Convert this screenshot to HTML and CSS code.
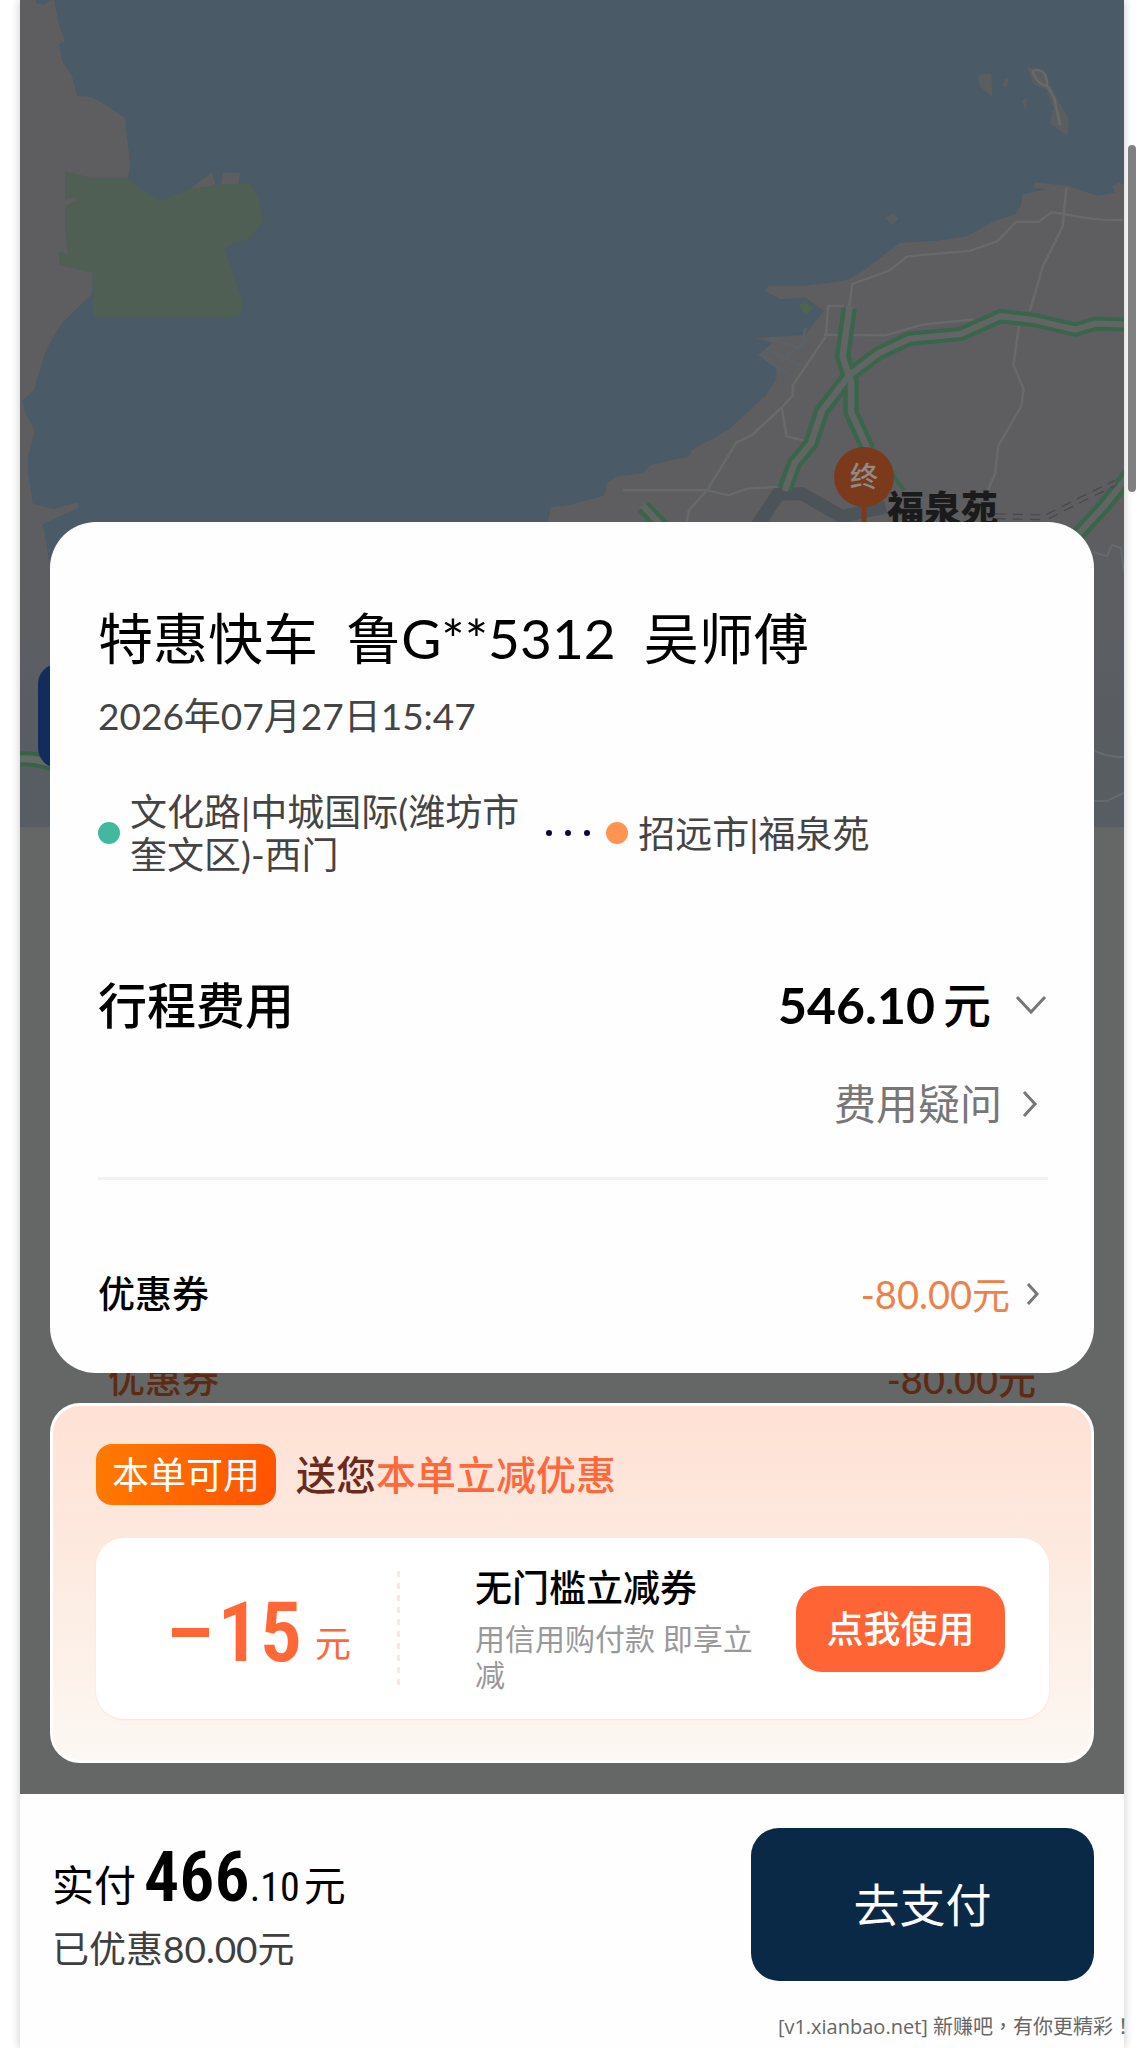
FILE: index.html
```html
<!DOCTYPE html>
<html lang="zh-CN">
<head>
<meta charset="utf-8">
<meta name="viewport" content="width=device-width, initial-scale=1">
<title>订单支付</title>
<link rel="stylesheet" href="styles.css">
</head>
<body>
<div class="phone">
  <main class="stage">
    <svg class="map" viewBox="21 0 1104 827" preserveAspectRatio="xMidYMin slice" aria-hidden="true">
      <defs>
        <linearGradient id="ground" x1="0" y1="0" x2="0" y2="1">
          <stop offset="0" stop-color="#5e5e61"/>
          <stop offset=".6" stop-color="#5e5e61"/>
          <stop offset="1" stop-color="#575d62"/>
        </linearGradient>
      </defs>
      <rect x="0" y="0" width="1145" height="827" fill="url(#ground)"/>
      <path fill="#4a5a66" d="M55 0 60 25 66 41 60 44 63 61 73 76 78 96 93 97 108 106 126 118 129 145 131 166 129 176 94 260 93 294 62 324 47 350 35 390 23 401 26 412 36 431 29 456 29 473 34 504 55 509 79 502 79 508 44 524 50 560 400 560 552 523 552 508H1125V0Z"/>
      <path fill="#4a5a66" d="M37 0h14l-6 5-8-2z"/>
      <path fill="#5e5e61" d="M190 190 213 172 217 186ZM222 185 224 173H241L239 185Z"/>
      <path fill="#505f54" d="M66 171 89 177H128L141 189 161 201 190 189 223 184H252L259 196 264 221 252 237 225 248 234 274 243 301 242 315 234 317H94V273L60 265V252L69 253 66 233V206L77 201V197L66 199Z"/>
      <g transform="translate(573 0) scale(.3648 .3381)">
        <path fill="#5e5e61" d="M1520 550 1500 540 1480 552 1490 570 1440 578 1360 550 1270 540 1265 555 1300 560 1235 575 1230 610 1215 635 1165 650 1130 670 1080 700 1000 712 900 718 860 750 800 800 750 830 640 845H540L528 860 570 885 640 880 690 920 660 960 640 990 505 1000 550 1015 510 1050 560 1090V1120L530 1170 480 1220 430 1270 330 1330 320 1350 215 1375 195 1400 120 1410 95 1430 90 1465 0 1492-58 1500-75 1600H1520Z"/>
        <path fill="#5a5e61" d="M1112 230 1125 218H1150L1152 285 1120 258ZM1185 232l12-4-4 28-12 2ZM1232 300l14-10v34ZM1248 200 1290 205 1308 245 1340 310 1362 350 1358 405 1342 390 1310 365 1320 320 1300 265 1265 250ZM860 645 880 630 895 648 875 665Z"/>
        <path fill="#4f6450" d="M622 900 640 892 660 912 640 932Z"/>
        <g fill="none" stroke="#686969" stroke-width="7">
          <path d="M1262 210q30-10 38 20t-10 20-28-40M1300 250l22 40 16 80"/>
          <path d="M1512 650Q1440 655 1345 632L1315 628 1280 656H1218L1165 714 1090 742 920 758 870 800 768 840 760 912M1355 555 1345 670 1290 790 1255 920M1225 965 1210 1080 1238 1150 1232 1200 1168 1320 1160 1400 1140 1450M745 905H702L696 995 605 1140V1170L575 1205 495 1285 450 1310 370 1450 320 1510 315 1545M575 1205 588 1290 640 1305M690 990 860 992 960 960 1100 945M140 1450H370L430 1465 480 1445 570 1440"/>
        </g>
        <g fill="none" stroke="#596269" stroke-width="7">
          <path d="M530 1030 625 1080M570 1070 650 1000M520 1050 600 1110M540 1000 630 1030 640 970"/>
        </g>
        <path d="M505 1560 565 1462 630 1460 740 1528 805 1512 860 1500" fill="none" stroke="#4c5359" stroke-width="38"/>
        <g fill="none" stroke="#3a654c" stroke-width="42">
          <path d="M583 1447 610 1370 655 1312 685 1215 760 1110 840 1045 925 1002 1065 988 1175 935 1270 947 1380 975 1435 957 1520 960"/>
          <path d="M760 912 742 1055 765 1130V1220L812 1330"/>
          <path d="M195 1498 250 1560M1530 1400 1460 1495 1370 1600"/>
          <path stroke-width="10" d="M870 1390 910 1450"/>
        </g>
        <g fill="none" stroke="#616664" stroke-width="18">
          <path d="M583 1452 610 1370 655 1312 685 1215 760 1110 840 1045 925 1002 1065 988 1175 935 1270 947 1380 975 1435 957 1520 960"/>
          <path d="M761 905 742 1055 765 1130V1220L812 1330"/>
          <path d="M193 1494 250 1560M1530 1400 1460 1495 1370 1600"/>
        </g>
        <path d="M1160 1527 1300 1530 1400 1475 1490 1428" fill="none" stroke="#48494c" stroke-width="18" stroke-dasharray="28 20"/>
        <path d="M1160 1527 1300 1530 1400 1475 1490 1428" fill="none" stroke="#5e5e61" stroke-width="10"/>
      </g>
      <path d="M1094 552 1108 556 1113 545 1122 548 1125 572M1094 750q15 8 31 7M1094 801h14l17-8" fill="none" stroke="#656a6d" stroke-width="2"/>
      <path d="M21 759q15-1 32 5" fill="none" stroke="#37624a" stroke-width="15"/>
      <path d="M21 759q15-1 32 5" fill="none" stroke="#646a66" stroke-width="7"/>
      <rect x="39" y="664" width="100" height="104" rx="20" fill="#142c5c"/>
      <path d="M865 500v24" stroke="#7c3a1c" stroke-width="5"/>
      <circle cx="865" cy="477" r="30" fill="#7c3a1c"/>
      <text class="pin-text" x="865" y="487" text-anchor="middle">终</text>
      <text class="pin-label" x="888" y="523">福泉苑</text>
    </svg>

    <section class="card">
      <h1 class="title">特惠快车&nbsp; 鲁G**5312&nbsp; 吴师傅</h1>
      <p class="date">2026年07月27日15:47</p>
      <div class="route">
        <span class="dot dot-start"></span>
        <span class="place">文化路|中城国际(潍坊市<br>奎文区)-西门</span>
        <span class="steps"><i></i><i></i><i></i></span>
        <span class="dot dot-end"></span>
        <span class="place">招远市|福泉苑</span>
      </div>
      <div class="row fee">
        <h2 class="fee-name">行程费用</h2>
        <button class="plain fee-sum" type="button"><b>546.10</b><span>元</span>
          <svg class="chev-down" width="32" height="20" viewBox="0 0 32 20" fill="none" stroke="#777" stroke-width="3"><path d="M2 2 16 17 30 2"/></svg>
        </button>
      </div>
      <a class="question" href="#question">费用疑问
        <svg width="16" height="28" viewBox="0 0 16 28" fill="none" stroke="#777" stroke-width="3"><path d="M2 2 13 14 2 26"/></svg>
      </a>
      <hr class="line">
      <a class="row coupon-row" href="#coupons">
        <span>优惠券</span>
        <span class="off">-80.00元
          <svg width="14" height="24" viewBox="0 0 14 24" fill="none" stroke="#777" stroke-width="3"><path d="M2 2 11 12 2 22"/></svg>
        </span>
      </a>
    </section>

    <div class="row under" aria-hidden="true"><span>优惠券</span><span>-80.00元</span></div>

    <section class="promo">
      <header class="promo-head">
        <span class="tag">本单可用</span>
        <h2 class="promo-title">送您<em>本单立减优惠</em></h2>
      </header>
      <div class="ticket">
        <div class="worth"><span class="minus"></span><b>15</b><span class="unit">元</span></div>
        <div class="detail">
          <h3>无门槛立减券</h3>
          <p>用信用购付款 即享立减</p>
        </div>
        <button class="use" type="button">点我使用</button>
      </div>
    </section>
  </main>

  <footer class="pay">
    <div>
      <p class="total">实付<b>466</b><small>.10</small><span>元</span></p>
      <p class="saved">已优惠80.00元</p>
    </div>
    <button class="go" type="button">去支付</button>
  </footer>
  <p class="mark" lang="zh-TW">[v1.xianbao.net] 新赚吧，有你更精彩！</p>
</div>
<div class="scrollbar"></div>
</body>
</html>
```
FILE: styles.css
```css
* { box-sizing: border-box; }

body {
  margin: 0;
  background: #fff;
  color: #000;
  font: 37px/44px Lato, "Noto Sans CJK SC", sans-serif;
}

h1, h2, h3, p { margin: 0; font-weight: 400; }
a { color: inherit; text-decoration: none; }
button { border: 0; padding: 0; font: inherit; color: inherit; cursor: pointer; }
svg { flex: none; }

.phone {
  margin: 0 21px 0 20px;
  background: #fefefe;
  box-shadow: 0 0 9px rgba(0, 0, 0, .22);
}

.stage {
  position: relative;
  overflow: hidden;
  padding: 522px 30px 31px;
  background: #656666;
}

.map {
  position: absolute;
  top: 0;
  left: 0;
  width: 100%;
  height: 827px;
}

.pin-text { font-size: 28px; font-weight: 500; fill: #8f8a85; }
.pin-label { font-size: 37px; font-weight: 900; fill: #1b1b1c; }

.row { display: flex; align-items: center; justify-content: space-between; }

.card {
  position: relative;
  z-index: 1;
  padding: 84px 46px 57px 48px;
  border-radius: 46px;
  background: #fefefe;
}

.title { font-size: 55px; line-height: 64px; }
.date { margin-top: 24px; color: #444; }

.route {
  display: flex;
  align-items: center;
  margin-top: 52px;
  color: #444;
  line-height: 43px;
}
.place { margin-left: 10px; }
.dot { width: 22px; height: 22px; border-radius: 50%; }
.dot-start { background: #42b99f; }
.dot-end { background: #ff9350; }
.steps { display: flex; gap: 13px; margin: 0 16px 0 27px; }
.steps i { width: 6px; height: 6px; border-radius: 50%; background: #0a0a3c; }

.fee { margin-top: 101px; font-size: 48px; line-height: 56px; }
.fee-name { font-size: 49px; font-weight: 500; }
.plain { background: none; }
.fee-sum { display: flex; align-items: center; font-weight: 500; }
.fee-sum b { font-size: 50px; font-weight: 700; }
.fee-sum span { margin-left: 8px; }
.chev-down { margin: 0 1px 0 24px; }

.question {
  display: flex;
  align-items: center;
  justify-content: flex-end;
  gap: 20px;
  width: fit-content;
  margin: 47px 10px 0 auto;
  color: #777;
  font-size: 42px;
  line-height: 48px;
}

.line { height: 3px; margin: 49px 0 0; border: 0; background: #f1f1f1; }

.coupon-row { margin-top: 92px; font-weight: 500; }
.off {
  display: flex;
  align-items: center;
  gap: 16px;
  margin-right: 8px;
  color: #ed8147;
  font-size: 38px;
  font-weight: 400;
}

.under {
  margin: -16px 58px 2px;
  color: #5c2b15;
  font-weight: 500;
}
.under span + span { font-size: 38px; }

.promo {
  position: relative;
  padding: 38px 42px 41px 43px;
  border: 3px solid #fff;
  border-radius: 30px;
  background: linear-gradient(#ffe1d5, #fde9de 40%, #fcf8f3);
}
.promo-head { display: flex; align-items: center; gap: 20px; margin-bottom: 33px; }
.tag {
  padding: 0 16px;
  border-radius: 16px;
  background: linear-gradient(100deg, #ff7b00, #ff5200);
  color: #fff;
  line-height: 61px;
}
.promo-title { color: #6a2a1e; font-size: 40px; font-weight: 500; }
.promo-title em { color: #ff683a; font-style: normal; }

.ticket {
  display: flex;
  align-items: center;
  min-height: 181px;
  padding: 0 44px 0 0;
  border-radius: 28px;
  background: #fff;
  box-shadow: 0 1px 2px #fde0d3;
}
.worth {
  display: flex;
  align-items: center;
  justify-content: flex-end;
  flex: none;
  width: 304px;
  height: 116px;
  padding: 8px 49px 0 0;
  background: repeating-linear-gradient(#fbe6df 0 6px, transparent 6px 12px) right / 3px 100% no-repeat;
  color: #ff6737;
  font-size: 36px;
}
.worth b { margin: 0 13px 0 8px; font: 600 84px/96px "Roboto Condensed", Roboto, sans-serif; }
.minus { width: 37px; height: 9px; background: #ff6737; }
.unit { padding-top: 20px; }
.detail { flex: 1; margin: 0 30px 0 75px; color: #999; font-size: 30px; line-height: 36px; }
.detail h3 { margin-bottom: 10px; color: #000; font-size: 37px; font-weight: 500; line-height: 44px; }
.use {
  width: 209px;
  height: 86px;
  border-radius: 26px;
  background: #ff6534;
  color: #fff;
  font-weight: 500;
}

.pay {
  display: flex;
  align-items: center;
  justify-content: space-between;
  padding: 34px 30px 32px 32px;
}
.total { font-size: 42px; line-height: 78px; }
.total b { margin-left: 8px; font: 600 70px/78px "Roboto Condensed", Roboto, sans-serif; }
.total small { font: 40px/78px "Roboto Condensed", Roboto, sans-serif; }
.total span { margin-left: 4px; }
.saved { color: #3f3f3f; }
.go {
  width: 343px;
  height: 153px;
  border-radius: 28px;
  background: #0a2946;
  color: #fff;
  font-size: 46px;
}

.mark {
  padding-bottom: 7px;
  margin-right: -9px;
  color: #666;
  font: 20px/28px "Open Sans", "Noto Sans CJK TC", sans-serif;
  text-align: right;
}

.scrollbar {
  position: fixed;
  top: 145px;
  right: 9px;
  width: 8px;
  height: 347px;
  border-radius: 4px;
  background: #808080;
}
```
